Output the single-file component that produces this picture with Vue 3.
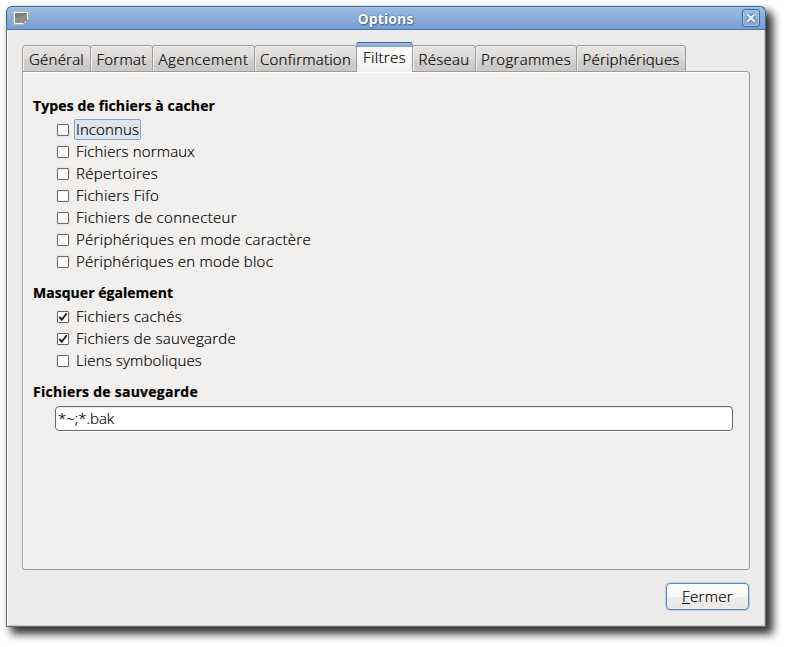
<script setup>
const tabs = [
  { label: 'Général', size: 69, text: 55 },
  { label: 'Format', size: 63, text: 50 },
  { label: 'Agencement', size: 103, text: 90 },
  { label: 'Confirmation', size: 103, text: 91 },
  { label: 'Filtres', size: 57, text: 43, active: true },
  { label: 'Réseau', size: 64, text: 51 },
  { label: 'Programmes', size: 102, text: 90 },
  { label: 'Périphériques', size: 110, text: 97 },
]
const groups = [
  {
    title: 'Types de fichiers à cacher',
    text: 182,
    items: [
      { label: 'Inconnus', text: 63, focus: true },
      { label: 'Fichiers normaux', text: 119 },
      { label: 'Répertoires', text: 82 },
      { label: 'Fichiers Fifo', text: 83 },
      { label: 'Fichiers de connecteur', text: 161 },
      { label: 'Périphériques en mode caractère', text: 235 },
      { label: 'Périphériques en mode bloc', text: 197 },
    ],
  },
  {
    title: 'Masquer également',
    text: 140,
    items: [
      { label: 'Fichiers cachés', text: 106, checked: true },
      { label: 'Fichiers de sauvegarde', text: 160, checked: true },
      { label: 'Liens symboliques', text: 126 },
    ],
  },
]

// Spreads the letters of a label over the given width.
const vFit = {
  mounted(el, { value }) {
    el.style.letterSpacing = '0px'
    const natural = el.getBoundingClientRect().width
    el.style.letterSpacing = (value - natural) / el.textContent.length + 'px'
  },
}
</script>

<template>
  <div class="desktop">
    <div class="window">
      <header class="titlebar">
        <svg class="app-icon" width="16" height="14" viewBox="0 0 16 14">
          <path d="M0.5 0.5H15.5V9.5L11.5 13.5H0.5Z" fill="#f4f4f0" stroke="#b9bab5" />
          <path d="M2 2H14V9L11 12H2Z" fill="#8d9089" />
          <path d="M2 7L14 3V2H2Z" fill="#7b7e78" />
          <path d="M11 13.5V9.5H15.5Z" fill="#d5d6d0" stroke="#777a73" stroke-width="0.8" />
        </svg>
        <h1><span v-fit="56">Options</span></h1>
        <button class="close" aria-label="Fermer">
          <svg width="12" height="12" viewBox="0 0 12 12">
            <path d="M2.5 2.5L9.5 9.5M9.5 2.5L2.5 9.5" stroke="#55799f" stroke-width="4.4" />
            <path d="M2.3 2.3L9.7 9.7M9.7 2.3L2.3 9.7" stroke="#e6eefa" stroke-width="2.4" />
          </svg>
        </button>
      </header>
      <main class="content">
        <nav class="tabs">
          <div v-for="t in tabs" :key="t.label" class="tab" :class="{ active: t.active }" :style="{ width: t.size + 'px' }">
            <span v-fit="t.text">{{ t.label }}</span>
          </div>
        </nav>
        <section class="panel">
          <div v-for="g in groups" :key="g.title" class="group">
            <h2><span v-fit="g.text">{{ g.title }}</span></h2>
            <div v-for="i in g.items" :key="i.label" class="row">
              <span class="box">
                <svg v-if="i.checked" width="10" height="10" viewBox="0 0 10 10">
                  <path d="M1.3 4.8L3.8 7.8L8.7 1.2" fill="none" stroke="#1c1c1c" stroke-width="1.9" />
                </svg>
              </span>
              <span class="label" :class="{ focus: i.focus }"><span v-fit="i.text">{{ i.label }}</span></span>
            </div>
          </div>
          <div class="group">
            <h2><span v-fit="165">Fichiers de sauvegarde</span></h2>
            <div class="field"><span v-fit="56">*~;*.bak</span></div>
          </div>
        </section>
        <footer class="actions">
          <button class="ok"><span v-fit="51"><u>F</u>ermer</span></button>
        </footer>
      </main>
    </div>
  </div>
</template>

<style>
body {
  background: #fff;
}
</style>

<style scoped>
.desktop {
  box-sizing: border-box;
  width: 786px;
  height: 647px;
  padding: 6px;
  overflow: hidden;
}
.window {
  box-sizing: border-box;
  width: 760px;
  height: 621px;
  display: flex;
  flex-direction: column;
  border-radius: 6px 6px 0 0;
  box-shadow: 6px 6px 9px 1px rgba(0, 0, 0, 0.8), 0 0 5px rgba(0, 0, 0, 0.06);
  font: 300 15px "Open Sans", "Noto Sans", sans-serif;
  color: #000;
  -webkit-text-stroke: 0.2px;
}
.titlebar {
  box-sizing: border-box;
  height: 24px;
  display: flex;
  align-items: center;
  padding: 0 5px 0 6px;
  border: 1px solid #3f6694;
  border-bottom-color: #4a76ad;
  border-radius: 6px 6px 0 0;
  background: linear-gradient(#9dbce6, #779fd1);
  box-shadow: inset 0 1px #a9c5ea;
}
.app-icon {
  flex: none;
}
h1 {
  flex: 1;
  margin: 0;
  text-align: center;
  font: 700 14px/23px "Open Sans", sans-serif;
  color: #fff;
  text-shadow: 0 0 2px #345b90, 1px 1px 1px #4870a6;
  -webkit-text-stroke: 0;
}
.close {
  box-sizing: border-box;
  display: grid;
  place-items: center;
  width: 18px;
  height: 18px;
  padding: 0;
  border: 1px solid #41679b;
  border-radius: 3px;
  background: linear-gradient(#9dbce6, #7fa5d6);
  box-shadow: inset 0 0 0 1px #a8c4ea;
}
.content {
  box-sizing: border-box;
  flex: 1;
  padding: 12px 15px 16px;
  border: 1px solid #6e6c69;
  border-top: 0;
  background: #edecea;
  box-shadow: inset 1px 0 #fff, inset -1px -1px #c9c7c4;
  display: flex;
  flex-direction: column;
}
.tabs {
  display: flex;
  align-items: flex-end;
  height: 30px;
  margin-bottom: -1px;
}
.tab {
  box-sizing: border-box;
  flex: none;
  height: 27px;
  margin-right: -1px;
  display: flex;
  justify-content: center;
  border: 1px solid #9d9c9a;
  border-radius: 3px 3px 0 0;
  background: linear-gradient(#e6e5e3, #dcdbd9 50%, #d2d1cf 55%, #cac9c7);
  box-shadow: inset 1px 1px #f2f1f0;
  line-height: 26px;
  white-space: pre;
}
.tab.active {
  z-index: 1;
  height: 30px;
  border-color: #3f6694 #9d9c9a transparent;
  border-bottom: 0;
  background: linear-gradient(#a7c2ea 0, #7b9fd3 4px, #fdfdfd 4px, #f1f0ee);
  box-shadow: none;
  line-height: 28px;
}
.panel {
  box-sizing: border-box;
  height: 499px;
  padding: 23px 16px 0 10px;
  border: 1px solid #9d9c9a;
  border-radius: 0 3px 3px 3px;
  background: #f1f0ee;
  box-shadow: inset 1px 1px #fff;
}
.group {
  margin-bottom: 9px;
}
h2 {
  margin: 0;
  height: 24px;
  font: 700 14px/22px "Open Sans", sans-serif;
  white-space: pre;
}
.row {
  display: flex;
  align-items: center;
  gap: 5px;
  height: 22px;
  padding-left: 24px;
}
.box {
  box-sizing: border-box;
  width: 12px;
  height: 12px;
  border: 1px solid #6b6966;
  border-radius: 1px;
  background: #fff;
  box-shadow: 0 0 0 1px #e8e7e5;
  display: grid;
  place-items: center;
}
.label {
  box-sizing: border-box;
  height: 21px;
  margin-top: -1px;
  padding: 0 1px;
  border: 1px solid transparent;
  border-radius: 2px;
  line-height: 18px;
  white-space: pre;
}
.focus {
  border-color: #86a3c9;
  background: #dde4ec;
}
.field {
  box-sizing: border-box;
  height: 25px;
  margin: 1px 0 0 22px;
  padding: 0 2px;
  border: 1px solid #6b6966;
  border-radius: 4px;
  background: #fff;
  box-shadow: inset 0 1px #e8e7e5, 0 1px #fafafa;
  line-height: 23px;
}
.actions {
  display: flex;
  justify-content: flex-end;
  margin-top: 13px;
  padding-right: 1px;
}
.ok {
  box-sizing: border-box;
  width: 83px;
  height: 27px;
  padding: 0;
  border: 1px solid #5f87bd;
  border-radius: 4px;
  background: linear-gradient(#fff, #f8f8f7 50%, #efeeed 52%, #e9e8e6);
  box-shadow: 0 0 0 1px #bccfe9;
  font: inherit;
  line-height: 25px;
  color: #000;
}
</style>
